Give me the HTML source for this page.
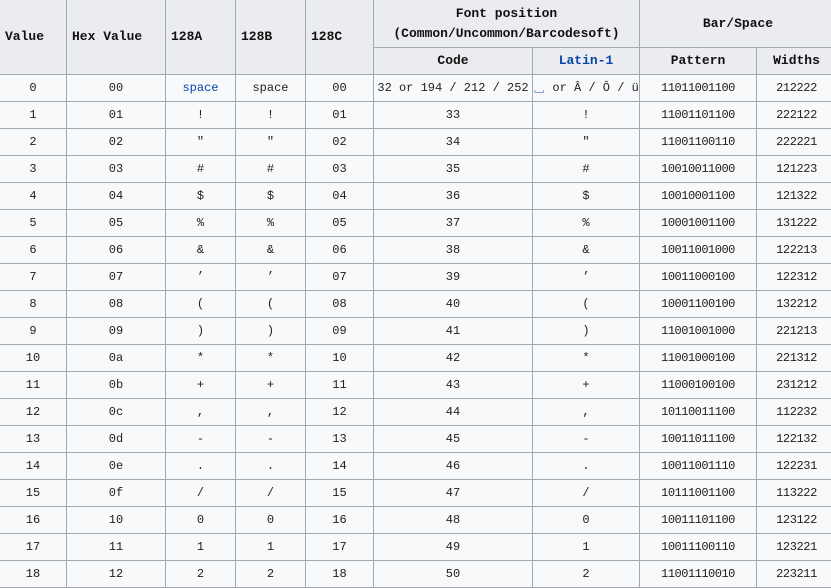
<!DOCTYPE html>
<html><head><meta charset="utf-8"><style>
html,body{margin:0;padding:0;width:831px;height:565px;overflow:hidden;background:#fff}
table{position:absolute;left:-1px;top:0px;border-collapse:collapse;table-layout:fixed;width:837px;font-family:"Liberation Mono","Noto Sans CJK SC",monospace;font-size:12px;color:#202122}
td,th{border:1px solid #a2a9b1;padding:0;text-align:center;height:26px;line-height:26px;background:#f8f9fa;white-space:nowrap;overflow:hidden}
th{background:#eaecf0;font-weight:bold;font-size:13px;color:#111}
tr:first-child th{border-top:none}
th.l{text-align:left;padding-left:5px}
tr.h1 th{height:47px;line-height:20px}
.b{color:#0645ad}
td.p{letter-spacing:-0.5px}
td.w{letter-spacing:-0.4px}
</style></head><body>
<table>
<colgroup><col style="width:67px"><col style="width:99px"><col style="width:70px"><col style="width:70px"><col style="width:68px"><col style="width:159px"><col style="width:107px"><col style="width:117px"><col style="width:80px"></colgroup>
<tr class="h1"><th rowspan="2" class="l">Value</th><th rowspan="2" class="l">Hex Value</th><th rowspan="2" class="l">128A</th><th rowspan="2" class="l">128B</th><th rowspan="2" class="l">128C</th><th colspan="2">Font position<br>(Common/Uncommon/Barcodesoft)</th><th colspan="2">Bar/Space</th></tr>
<tr><th>Code</th><th class="b">Latin-1</th><th>Pattern</th><th>Widths</th></tr>
<tr><td>0</td><td>00</td><td class="b">space</td><td>space</td><td>00</td><td>32 or 194 / 212 / 252</td><td><span class="b">&#9251;</span> or Â / Ô / ü</td><td class="p">11011001100</td><td class="w">212222</td></tr>
<tr><td>1</td><td>01</td><td>!</td><td>!</td><td>01</td><td>33</td><td>!</td><td class="p">11001101100</td><td class="w">222122</td></tr>
<tr><td>2</td><td>02</td><td>″</td><td>″</td><td>02</td><td>34</td><td>″</td><td class="p">11001100110</td><td class="w">222221</td></tr>
<tr><td>3</td><td>03</td><td>#</td><td>#</td><td>03</td><td>35</td><td>#</td><td class="p">10010011000</td><td class="w">121223</td></tr>
<tr><td>4</td><td>04</td><td>$</td><td>$</td><td>04</td><td>36</td><td>$</td><td class="p">10010001100</td><td class="w">121322</td></tr>
<tr><td>5</td><td>05</td><td>%</td><td>%</td><td>05</td><td>37</td><td>%</td><td class="p">10001001100</td><td class="w">131222</td></tr>
<tr><td>6</td><td>06</td><td>&amp;</td><td>&amp;</td><td>06</td><td>38</td><td>&amp;</td><td class="p">10011001000</td><td class="w">122213</td></tr>
<tr><td>7</td><td>07</td><td>’</td><td>’</td><td>07</td><td>39</td><td>’</td><td class="p">10011000100</td><td class="w">122312</td></tr>
<tr><td>8</td><td>08</td><td>(</td><td>(</td><td>08</td><td>40</td><td>(</td><td class="p">10001100100</td><td class="w">132212</td></tr>
<tr><td>9</td><td>09</td><td>)</td><td>)</td><td>09</td><td>41</td><td>)</td><td class="p">11001001000</td><td class="w">221213</td></tr>
<tr><td>10</td><td>0a</td><td>*</td><td>*</td><td>10</td><td>42</td><td>*</td><td class="p">11001000100</td><td class="w">221312</td></tr>
<tr><td>11</td><td>0b</td><td>+</td><td>+</td><td>11</td><td>43</td><td>+</td><td class="p">11000100100</td><td class="w">231212</td></tr>
<tr><td>12</td><td>0c</td><td>,</td><td>,</td><td>12</td><td>44</td><td>,</td><td class="p">10110011100</td><td class="w">112232</td></tr>
<tr><td>13</td><td>0d</td><td>-</td><td>-</td><td>13</td><td>45</td><td>-</td><td class="p">10011011100</td><td class="w">122132</td></tr>
<tr><td>14</td><td>0e</td><td>.</td><td>.</td><td>14</td><td>46</td><td>.</td><td class="p">10011001110</td><td class="w">122231</td></tr>
<tr><td>15</td><td>0f</td><td>/</td><td>/</td><td>15</td><td>47</td><td>/</td><td class="p">10111001100</td><td class="w">113222</td></tr>
<tr><td>16</td><td>10</td><td>0</td><td>0</td><td>16</td><td>48</td><td>0</td><td class="p">10011101100</td><td class="w">123122</td></tr>
<tr><td>17</td><td>11</td><td>1</td><td>1</td><td>17</td><td>49</td><td>1</td><td class="p">10011100110</td><td class="w">123221</td></tr>
<tr><td>18</td><td>12</td><td>2</td><td>2</td><td>18</td><td>50</td><td>2</td><td class="p">11001110010</td><td class="w">223211</td></tr>
</table>
</body></html>
